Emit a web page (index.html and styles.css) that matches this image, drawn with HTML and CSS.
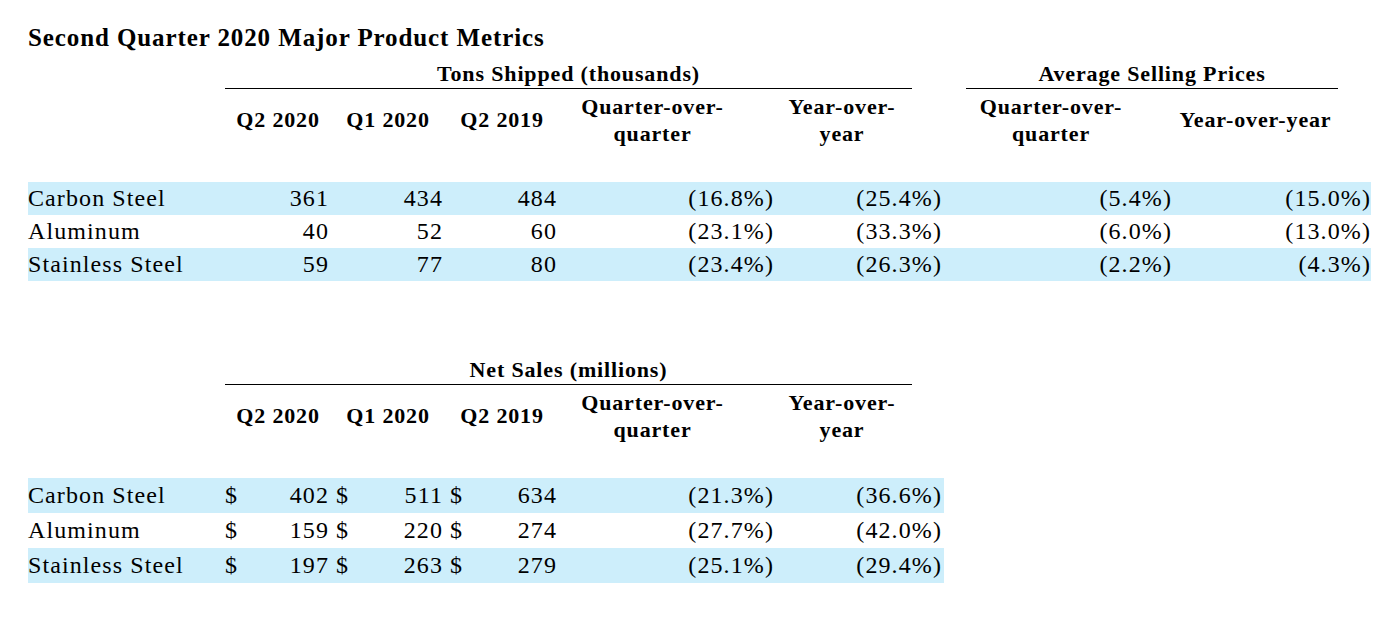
FILE: index.html
```html
<!DOCTYPE html>
<html>
<head>
<meta charset="utf-8">
<link rel="stylesheet" href="styles.css">
</head>
<body>
<div class="page">
  <h1 class="title">Second Quarter 2020 Major Product Metrics</h1>

  <section class="table top">
    <div class="grid group-row">
      <div class="group g-tons">Tons Shipped (thousands)</div>
      <div class="group g-asp">Average Selling Prices</div>
    </div>
    <div class="grid head-row">
      <div class="h c2">Q2 2020</div>
      <div class="h c3">Q1 2020</div>
      <div class="h c4">Q2 2019</div>
      <div class="h c5">Quarter-over-<br>quarter</div>
      <div class="h c6">Year-over-<br>year</div>
      <div class="h c7">Quarter-over-<br>quarter</div>
      <div class="h c8">Year-over-year</div>
    </div>
    <div class="grid row band">
      <div class="label">Carbon Steel</div>
      <div class="num">361</div><div class="num">434</div><div class="num">484</div>
      <div class="num">(16.8%)</div><div class="num">(25.4%)</div>
      <div class="num">(5.4%)</div><div class="num last">(15.0%)</div>
    </div>
    <div class="grid row">
      <div class="label">Aluminum</div>
      <div class="num">40</div><div class="num">52</div><div class="num">60</div>
      <div class="num">(23.1%)</div><div class="num">(33.3%)</div>
      <div class="num">(6.0%)</div><div class="num last">(13.0%)</div>
    </div>
    <div class="grid row band">
      <div class="label">Stainless Steel</div>
      <div class="num">59</div><div class="num">77</div><div class="num">80</div>
      <div class="num">(23.4%)</div><div class="num">(26.3%)</div>
      <div class="num">(2.2%)</div><div class="num last">(4.3%)</div>
    </div>
  </section>

  <section class="table bottom">
    <div class="grid group-row">
      <div class="group g-tons">Net Sales (millions)</div>
    </div>
    <div class="grid head-row">
      <div class="h c2">Q2 2020</div>
      <div class="h c3">Q1 2020</div>
      <div class="h c4">Q2 2019</div>
      <div class="h c5">Quarter-over-<br>quarter</div>
      <div class="h c6">Year-over-<br>year</div>
    </div>
    <div class="grid row band">
      <div class="label">Carbon Steel</div>
      <div class="money m2"><span>$</span><span>402</span></div>
      <div class="money"><span>$</span><span>511</span></div>
      <div class="money"><span>$</span><span>634</span></div>
      <div class="num">(21.3%)</div><div class="num">(36.6%)</div>
    </div>
    <div class="grid row">
      <div class="label">Aluminum</div>
      <div class="money m2"><span>$</span><span>159</span></div>
      <div class="money"><span>$</span><span>220</span></div>
      <div class="money"><span>$</span><span>274</span></div>
      <div class="num">(27.7%)</div><div class="num">(42.0%)</div>
    </div>
    <div class="grid row band">
      <div class="label">Stainless Steel</div>
      <div class="money m2"><span>$</span><span>197</span></div>
      <div class="money"><span>$</span><span>263</span></div>
      <div class="money"><span>$</span><span>279</span></div>
      <div class="num">(25.1%)</div><div class="num">(29.4%)</div>
    </div>
  </section>
</div>
</body>
</html>
```

FILE: styles.css
```css
html, body {
  margin: 0;
  padding: 0;
  background: #ffffff;
}

body {
  font-family: "Liberation Serif", "Times New Roman", serif;
  color: #000000;
}

.page {
  padding: 24px 0 0 28px;
}

.title {
  margin: 0;
  font-size: 25px;
  letter-spacing: 0.9px;
  line-height: 28px;
  font-weight: bold;
}

.grid {
  display: grid;
  width: max-content;
  grid-template-columns: 197px 106px 114px 114px 217px 168px 230px 197px;
}

.bottom .grid {
  grid-template-columns: 197px 106px 114px 114px 217px 168px;
}

.group-row {
  height: 37px;
  align-items: end;
}

.group {
  font-weight: bold;
  font-size: 22px;
  letter-spacing: 0.85px;
  line-height: 24px;
  text-align: center;
  border-bottom: 1px solid #000;
  padding-bottom: 2px;
  white-space: nowrap;
}

.g-tons {
  grid-column: 2 / 7;
  margin-right: 32px;
}

.g-asp {
  grid-column: 7 / 9;
  margin-left: 22px;
  margin-right: 33px;
}

.head-row {
  height: 93px;
  align-items: start;
}

.h {
  font-weight: bold;
  font-size: 22px;
  letter-spacing: 0.85px;
  line-height: 27px;
  text-align: center;
  padding-top: 4px;
  white-space: nowrap;
}

.h.c2 { grid-column: 2; padding-top: 17px; }
.h.c3 { grid-column: 3; padding-top: 17px; }
.h.c4 { grid-column: 4; padding-top: 17px; }
.h.c5 { grid-column: 5; padding-right: 30px; }
.h.c6 { grid-column: 6; padding-right: 36px; }
.h.c7 { grid-column: 7; padding-right: 16px; }
.h.c8 { grid-column: 8; padding-top: 17px; padding-right: 34px; }

.row {
  height: 33px;
  align-items: center;
  font-size: 24px;
  letter-spacing: 1.1px;
  line-height: 33px;
}

.bottom .row {
  height: 35px;
  line-height: 35px;
}

.band {
  background: #cdeefb;
}

.label {
  white-space: nowrap;
}

.num {
  text-align: right;
  padding-right: 2px;
  white-space: nowrap;
}

.num.last {
  padding-right: 0;
}

.money {
  display: flex;
  justify-content: space-between;
  padding: 0 2px 0 5px;
}

.money.m2 {
  padding-left: 0;
}

.bottom {
  margin-top: 67px;
}
```
